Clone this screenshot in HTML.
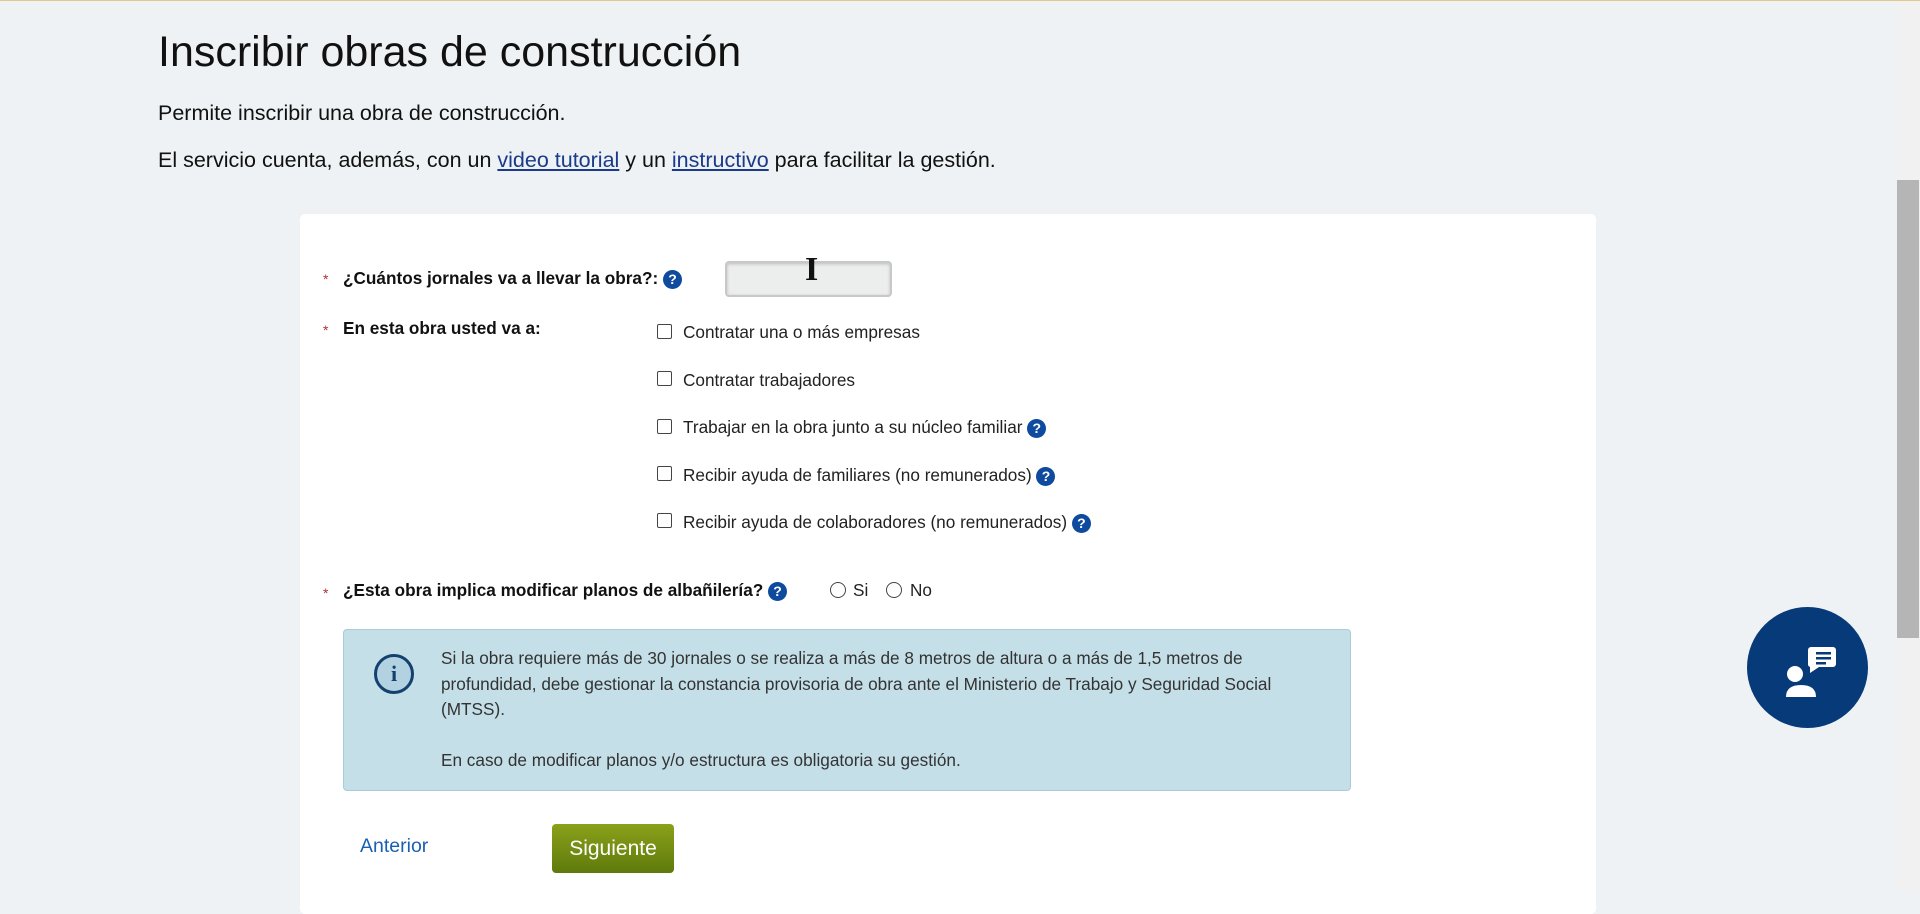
<!DOCTYPE html>
<html><head><meta charset="utf-8"><style>
*{margin:0;padding:0;box-sizing:border-box}
body{width:1920px;height:888px;overflow:hidden;background:#eef2f4;font-family:"Liberation Sans",Arial,sans-serif;color:#111;position:relative;border-top:1px solid #e0c98a}
.a{position:absolute;white-space:nowrap}
h1{position:absolute;left:158px;top:27px;font-size:43px;font-weight:normal;color:#111}
.p{font-size:21.5px}
a{color:#1a3a8a;text-decoration:underline}
.card{position:absolute;left:300px;top:213px;width:1296px;height:700px;background:#fff;border-radius:5px}
.req{color:#b03030;font-size:14px}
.lbl{font-size:17.2px;font-weight:bold;color:#111}
.q{display:inline-block;width:19px;height:19px;border-radius:50%;background:#0e4a9e;color:#fff;font-size:14px;font-weight:bold;text-align:center;line-height:19px;vertical-align:middle;margin-left:0px}
.cb{position:absolute;width:15px;height:15px;border:1.5px solid #444;border-radius:2px;background:#fff}
.t{font-size:17.2px;color:#222}
.rd{position:absolute;width:16px;height:16px;border:1.5px solid #444;border-radius:50%}
</style></head><body>
<h1>Inscribir obras de construcción</h1>
<div class="a p" style="left:158px;top:100px">Permite inscribir una obra de construcción.</div>
<div class="a p" style="left:158px;top:147px">El servicio cuenta, además, con un <a>video tutorial</a> y un <a>instructivo</a> para facilitar la gestión.</div>
<div class="card"></div>
<div class="a req" style="left:323px;top:270px">*</div>
<div class="a lbl" style="left:343px;top:267px">¿Cuántos jornales va a llevar la obra?: <span class="q">?</span></div>
<div class="a" style="left:725px;top:260px;width:167px;height:36px;border:2px solid #c8c8c8;border-radius:4px;background:#eceeee;box-shadow:inset 0 1px 3px #bbb"></div>
<div class="a" style="left:805px;top:252px;font-family:'Liberation Serif',serif;font-size:34px;font-weight:bold;line-height:34px">I</div>
<div class="a req" style="left:323px;top:321px">*</div>
<div class="a lbl" style="left:343px;top:317px">En esta obra usted va a:</div>
<div class="cb" style="left:657px;top:323px"></div><div class="a t" style="left:683px;top:321px">Contratar una o más empresas</div>
<div class="cb" style="left:657px;top:370px"></div><div class="a t" style="left:683px;top:369px">Contratar trabajadores</div>
<div class="cb" style="left:657px;top:418px"></div><div class="a t" style="left:683px;top:416px">Trabajar en la obra junto a su núcleo familiar <span class="q">?</span></div>
<div class="cb" style="left:657px;top:465px"></div><div class="a t" style="left:683px;top:464px">Recibir ayuda de familiares (no remunerados) <span class="q">?</span></div>
<div class="cb" style="left:657px;top:512px"></div><div class="a t" style="left:683px;top:511px">Recibir ayuda de colaboradores (no remunerados) <span class="q">?</span></div>
<div class="a req" style="left:323px;top:584px">*</div>
<div class="a lbl" style="left:343px;top:579px">¿Esta obra implica modificar planos de albañilería? <span class="q">?</span></div>
<div class="rd" style="left:830px;top:581px"></div><div class="a t" style="left:853px;top:579px">Si</div>
<div class="rd" style="left:886px;top:581px"></div><div class="a t" style="left:910px;top:579px">No</div>
<div class="a" style="left:343px;top:628px;width:1008px;height:162px;background:#c4dfe7;border:1px solid #a9ccd8;border-radius:4px"></div>
<div class="a" style="left:374px;top:653px;width:40px;height:40px;border:3px solid #13406e;border-radius:50%;background:#b3d2e1;color:#13406e;font-family:'Liberation Serif',serif;font-weight:bold;font-size:22px;text-align:center;line-height:34px">i</div>
<div class="a" style="left:441px;top:645px;font-size:17.2px;line-height:25.5px;color:#333">Si la obra requiere más de 30 jornales o se realiza a más de 8 metros de altura o a más de 1,5 metros de<br>profundidad, debe gestionar la constancia provisoria de obra ante el Ministerio de Trabajo y Seguridad Social<br>(MTSS).<br><br>En caso de modificar planos y/o estructura es obligatoria su gestión.</div>
<div class="a" style="left:360px;top:834px;font-size:19.5px;color:#1a5fb4">Anterior</div>
<div class="a" style="left:552px;top:823px;width:122px;height:49px;border-radius:4px;background:linear-gradient(#8aa11a,#5f7a0c);color:#fff;font-size:21px;text-align:center;line-height:49px">Siguiente</div>
<div class="a" style="left:1747px;top:606px;width:121px;height:121px;border-radius:50%;background:#063a78">
<svg width="121" height="121" viewBox="0 0 121 121"><circle cx="48" cy="67" r="8" fill="#fff"/><path d="M39 90 Q39 78 54 78 Q69 78 69 90 Z" fill="#fff"/><path d="M64 40 h22 a3 3 0 0 1 3 3 v14 a3 3 0 0 1-3 3 h-14 l-9 6 v-6 a3 3 0 0 1-2-3 v-14 a3 3 0 0 1 3-3z" fill="#fff"/><rect x="69" y="45" width="15" height="2.5" fill="#063a78"/><rect x="69" y="50" width="15" height="2.5" fill="#063a78"/><rect x="69" y="55" width="10" height="2.5" fill="#063a78"/></svg></div>
<div class="a" style="left:1897px;top:0;width:23px;height:888px;background:#f1f1f1"></div>
<div class="a" style="left:1897px;top:179px;width:22px;height:458px;background:#b5b5b5"></div>
</body></html>
